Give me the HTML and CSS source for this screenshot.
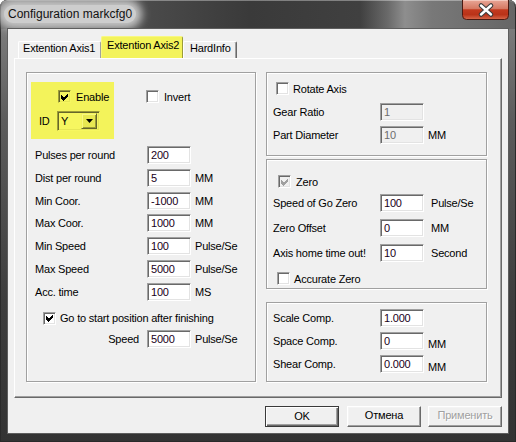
FILE: index.html
```html
<!DOCTYPE html>
<html>
<head>
<meta charset="utf-8">
<link rel="stylesheet" href="styles.css">
</head>
<body>
<div class="window">
  <div class="titlebar">
    <span class="title">Configuration markcfg0</span>
    <div class="close">
      <svg width="47" height="20" viewBox="0 0 47 20">
        <defs>
          <linearGradient id="cg" x1="0" y1="0" x2="0" y2="1">
            <stop offset="0" stop-color="#e8a797"/>
            <stop offset="0.45" stop-color="#d57862"/>
            <stop offset="0.5" stop-color="#c23a1f"/>
            <stop offset="0.75" stop-color="#b93218"/>
            <stop offset="1" stop-color="#d86a4c"/>
          </linearGradient>
        </defs>
        <path d="M0.5 0 V15.5 Q0.5 19.5 4.5 19.5 H42.5 Q46.5 19.5 46.5 15.5 V0" fill="url(#cg)" stroke="#4a1a12" stroke-width="1"/>
        <path d="M1.5 0.5 H45.5" stroke="#f3c8bd" stroke-width="1"/>
        <path d="M19 5.5 L29 14.5 M29 5.5 L19 14.5" stroke="#3c3c3c" stroke-width="4.6" stroke-linecap="round"/>
        <path d="M19 5.5 L29 14.5 M29 5.5 L19 14.5" stroke="#ffffff" stroke-width="2.4" stroke-linecap="round"/>
      </svg>
    </div>
  </div>
  <div class="client">
    <div class="tabs">
      <div class="tab t1">Extention Axis1</div>
      <div class="tab active">Extention Axis2</div>
      <div class="tab t3">HardInfo</div>
    </div>
    <div class="panel">
      <div class="group leftgroup">
        <div class="toprow">
          <div class="hl">
            <div class="cbrow enable">
              <span class="cb"><svg viewBox="0 0 9 9" width="9" height="9"><polygon points="0,2 2.5,4.5 7,0 7,3 2.5,7.5 2,7.5 0,5"/></svg></span>
              <span class="cbtext">Enable</span>
            </div>
            <div class="idrow">
              <span class="idlbl">ID</span>
              <div class="combo">
                <span class="comboval">Y</span>
                <span class="dropbtn"><svg width="7" height="4" viewBox="0 0 7 4"><polygon points="0,0 7,0 3.5,4"/></svg></span>
              </div>
            </div>
          </div>
          <div class="cbrow invert">
            <span class="cb"></span>
            <span class="cbtext">Invert</span>
          </div>
        </div>
        <div class="rows lrows">
          <div class="row"><span class="lbl">Pulses per round</span><span class="inp">200</span></div>
          <div class="row"><span class="lbl">Dist per round</span><span class="inp">5</span><span class="unit">MM</span></div>
          <div class="row"><span class="lbl">Min Coor.</span><span class="inp">-1000</span><span class="unit">MM</span></div>
          <div class="row"><span class="lbl">Max Coor.</span><span class="inp">1000</span><span class="unit">MM</span></div>
          <div class="row"><span class="lbl">Min Speed</span><span class="inp">100</span><span class="unit">Pulse/Se</span></div>
          <div class="row"><span class="lbl">Max Speed</span><span class="inp">5000</span><span class="unit">Pulse/Se</span></div>
          <div class="row"><span class="lbl">Acc. time</span><span class="inp">100</span><span class="unit">MS</span></div>
        </div>
        <div class="cbrow goto">
          <span class="cb"><svg viewBox="0 0 9 9" width="9" height="9"><polygon points="0,2 2.5,4.5 7,0 7,3 2.5,7.5 2,7.5 0,5"/></svg></span>
          <span class="cbtext">Go to start position after finishing</span>
        </div>
        <div class="row speedrow"><span class="lbl right">Speed</span><span class="inp">5000</span><span class="unit">Pulse/Se</span></div>
      </div>
      <div class="rightcol">
        <div class="group g1">
          <div class="cbrow rotate">
            <span class="cb"></span>
            <span class="cbtext">Rotate Axis</span>
          </div>
          <div class="rows rrows1">
            <div class="row"><span class="lbl">Gear Ratio</span><span class="inp disabled">1</span></div>
            <div class="row"><span class="lbl">Part Diameter</span><span class="inp disabled">10</span><span class="unit">MM</span></div>
          </div>
        </div>
        <div class="group g2">
          <div class="cbrow zero">
            <span class="cb dis"><svg viewBox="0 0 9 9" width="9" height="9"><polygon points="0,2 2.5,4.5 7,0 7,3 2.5,7.5 2,7.5 0,5"/></svg></span>
            <span class="cbtext">Zero</span>
          </div>
          <div class="rows rrows2">
            <div class="row"><span class="lbl">Speed of Go Zero</span><span class="inp">100</span><span class="unit">Pulse/Se</span></div>
            <div class="row"><span class="lbl">Zero Offset</span><span class="inp">0</span><span class="unit">MM</span></div>
            <div class="row"><span class="lbl">Axis home time out!</span><span class="inp">10</span><span class="unit">Second</span></div>
          </div>
          <div class="cbrow accurate">
            <span class="cb"></span>
            <span class="cbtext">Accurate Zero</span>
          </div>
        </div>
        <div class="group g3">
          <div class="rows rrows3">
            <div class="row"><span class="lbl">Scale Comp.</span><span class="inp">1.000</span></div>
            <div class="row"><span class="lbl">Space Comp.</span><span class="inp">0</span><span class="unit low">MM</span></div>
            <div class="row"><span class="lbl">Shear Comp.</span><span class="inp">0.000</span><span class="unit low">MM</span></div>
          </div>
        </div>
      </div>
    </div>
    <div class="buttons">
      <div class="btn default">OK</div>
      <div class="btn b2">Отмена</div>
      <div class="btn b3 disabled">Применить</div>
    </div>
  </div>
</div>
</body>
</html>
```
FILE: styles.css
```css
* { box-sizing: border-box; }
html, body { margin: 0; padding: 0; }
body {
  width: 516px;
  height: 442px;
  overflow: hidden;
  background: #ffffff;
  font-family: "Liberation Sans", Arial, sans-serif;
  font-size: 11px;
  letter-spacing: -0.2px;
  color: #000;
}
.window {
  width: 516px;
  height: 442px;
  border-radius: 7px 7px 0 0;
  overflow: hidden;
  display: flex;
  flex-direction: column;
  background: linear-gradient(180deg, #858585 0px, #5c5c5c 120px, #3d3d3d 300px, #333 442px);
  box-shadow: inset 0 0 0 1px #2a2a2a;
}
.titlebar {
  height: 29px;
  flex: none;
  display: flex;
  align-items: flex-start;
  border-radius: 7px 7px 0 0;
  background: linear-gradient(90deg, #6a6a6a 0px, #4a4a4a 150px, #3a3a3a 250px, #404040 360px, #6a6a6a 388px, #8e8e8e 405px, #787878 432px, #666 516px);
  box-shadow: inset 0 1px 0 rgba(255,255,255,0.35), inset 1px 0 0 #2a2a2a, inset -1px 0 0 #2a2a2a;
}
.title {
  margin: 5px 0 0 4px;
  padding: 1px 4px;
  line-height: 16px;
  font-size: 12px;
  letter-spacing: 0;
  color: #111;
  background: #cdcdcd;
  border-radius: 10px;
  box-shadow: 0 0 9px 6px #c6c6c6;
}
.close {
  margin-left: auto;
  margin-right: 7px;
  width: 47px;
  height: 20px;
  line-height: 0;
}
.client {
  flex: none;
  margin: 0 8px;
  width: 500px;
  height: 404px;
  background: #f0f0f0;
  box-shadow: 0 0 0 1px #5e5e5e;
  display: flex;
  flex-direction: column;
}
.tabs {
  height: 29px;
  flex: none;
  display: flex;
  align-items: flex-end;
  padding-left: 10px;
}
.tab {
  height: 17px;
  padding: 0 4px;
  line-height: 13px;
  background: #f0f0f0;
  border-top: 1px solid #fff;
  border-left: 1px solid #fff;
  border-right: 1px solid #a0a0a0;
  border-radius: 2px 2px 0 0;
  white-space: nowrap;
}
.t1 { width: 83px; }
.tab.active {
  width: 82px;
  height: 22px;
  padding: 2px 5px 0;
  background: #f3f35b;
  border-top: 1px solid #f8f880;
  border-left: 1px solid #f8f880;
  border-right: 1px solid #9c9c3a;
}
.t3 {
  width: 54px;
  padding-left: 6px;
  border-right: 1px solid #696969;
  box-shadow: inset -1px 0 0 #a0a0a0;
}
.panel {
  flex: none;
  margin-left: 6px;
  width: 488px;
  height: 340px;
  border-top: 1px solid #fff;
  border-left: 1px solid #fff;
  border-right: 1px solid #696969;
  border-bottom: 1px solid #696969;
  box-shadow: inset -1px -1px 0 #a0a0a0;
  padding: 13px 0 0 11px;
  display: flex;
  align-items: flex-start;
}
.group {
  border: 1px solid #a0a0a0;
  box-shadow: inset 1px 1px 0 #fff, 1px 1px 0 #fff;
  display: flex;
  flex-direction: column;
  align-items: flex-start;
}
.leftgroup {
  width: 230px;
  height: 310px;
}
.toprow {
  display: flex;
  align-items: flex-start;
  margin-top: 9px;
  margin-left: 4px;
}
.hl {
  width: 83px;
  height: 57px;
  background: #f3f35b;
  padding: 8px 0 0 8px;
}
.cbrow {
  display: flex;
  align-items: center;
  height: 13px;
  white-space: nowrap;
}
.cb {
  width: 13px;
  height: 13px;
  flex: none;
  background: #fff;
  border: 1px solid;
  border-color: #a0a0a0 #fff #fff #a0a0a0;
  box-shadow: inset 1px 1px 0 #696969, inset -1px -1px 0 #e3e3e3;
  display: flex;
  align-items: center;
  justify-content: center;
  line-height: 0;
}
.cb svg { fill: #000; shape-rendering: crispEdges; margin: 1px 0 0 1px; }
.cb.dis { background: #f0f0f0; }
.cb.dis svg { fill: #a0a0a0; }
.enable { margin-left: 19px; }
.enable .cbtext { margin-left: 5px; }
.hl .cb {
  background: #f6f660;
  border-color: #9c9c3a #f6f660 #f6f660 #9c9c3a;
  box-shadow: inset 1px 1px 0 #66662a, inset -1px -1px 0 #e6e656;
}
.invert { margin-left: 32px; margin-top: 8px; }
.invert .cbtext { margin-left: 5px; }
.idrow {
  display: flex;
  align-items: center;
  margin-top: 8px;
}
.idlbl { width: 18px; }
.combo {
  width: 43px;
  height: 20px;
  border: 1px solid;
  border-color: #9c9c3a #f6f660 #f6f660 #9c9c3a;
  box-shadow: inset 1px 1px 0 #66662a, inset -1px -1px 0 #e6e656;
  background: #f6f660;
  padding: 2px 2px 2px 3px;
  display: flex;
  align-items: center;
}
.comboval { flex: 1; line-height: 16px; }
.dropbtn {
  width: 16px;
  height: 16px;
  border: 1px solid;
  border-color: #f3f35b #66662a #66662a #f3f35b;
  box-shadow: inset 1px 1px 0 #f8f880, inset -1px -1px 0 #9c9c3a;
  background: #e8e852;
  display: flex;
  align-items: center;
  justify-content: center;
  line-height: 0;
}
.dropbtn svg { fill: #000; margin-left: 1px; }
.rows {
  display: flex;
  flex-direction: column;
}
.row {
  display: flex;
  align-items: center;
  height: 18px;
  white-space: nowrap;
}
.lrows {
  margin-top: 7px;
  margin-left: 8px;
  gap: 4.83px;
}
.lrows .lbl, .speedrow .lbl { width: 112px; }
.inp {
  width: 44px;
  height: 18px;
  flex: none;
  background: #fff;
  border: 1px solid;
  border-color: #a0a0a0 #fff #fff #a0a0a0;
  box-shadow: inset 1px 1px 0 #696969, inset -1px -1px 0 #e3e3e3;
  padding: 0 0 0 3px;
  line-height: 16px;
  color: #1a001a;
}
.inp.disabled {
  background: #f0f0f0;
  color: #6d6d6d;
}
.unit { margin-left: 4px; }
.goto { margin-top: 11px; margin-left: 16px; }
.goto .cbtext { margin-left: 4px; }
.speedrow { margin-top: 5px; margin-left: 8px; }
.lbl.right { text-align: right; padding-right: 8px; }
.rightcol {
  margin-left: 10px;
  width: 221px;
  display: flex;
  flex-direction: column;
}
.rightcol .group { width: 221px; }
.rightcol .lbl { width: 107px; }
.g1 { height: 84px; }
.g2 { height: 130px; margin-top: 3px; }
.g3 { height: 80px; margin-top: 13px; }
.rotate { margin-top: 9px; margin-left: 9px; }
.rotate .cbtext { margin-left: 4px; }
.rrows1 { margin-top: 8px; margin-left: 6px; gap: 5px; }
.zero { margin-top: 15px; margin-left: 11px; }
.zero .cbtext { margin-left: 5px; }
.rrows2 { margin-top: 6px; margin-left: 6px; gap: 7px; }
.rrows2 .unit { margin-left: 7px; }
.accurate { margin-top: 10px; margin-left: 10px; }
.accurate .cbtext { margin-left: 4px; }
.rrows3 { margin-top: 6px; margin-left: 6px; gap: 5px; }
.unit.low { margin-top: 5px; }
.buttons {
  display: flex;
  justify-content: flex-end;
  margin-top: 8px;
  padding-right: 6px;
}
.btn {
  width: 74px;
  height: 21px;
  line-height: 17px;
  text-align: center;
  background: #f0f0f0;
  border: 1px solid;
  border-color: #fff #696969 #696969 #fff;
  box-shadow: inset -1px -1px 0 #a0a0a0, inset 1px 1px 0 #f4f4f4;
}
.btn.default {
  border-color: #3a3a3a;
  box-shadow: inset 1px 1px 0 #fff, inset -1px -1px 0 #696969, inset -2px -2px 0 #a0a0a0;
  line-height: 18px;
}
.b2 { margin-left: 8px; }
.b3 { margin-left: 7px; }
.btn.disabled {
  color: #a0a0a0;
  text-shadow: 1px 1px 0 #fff;
}
```
